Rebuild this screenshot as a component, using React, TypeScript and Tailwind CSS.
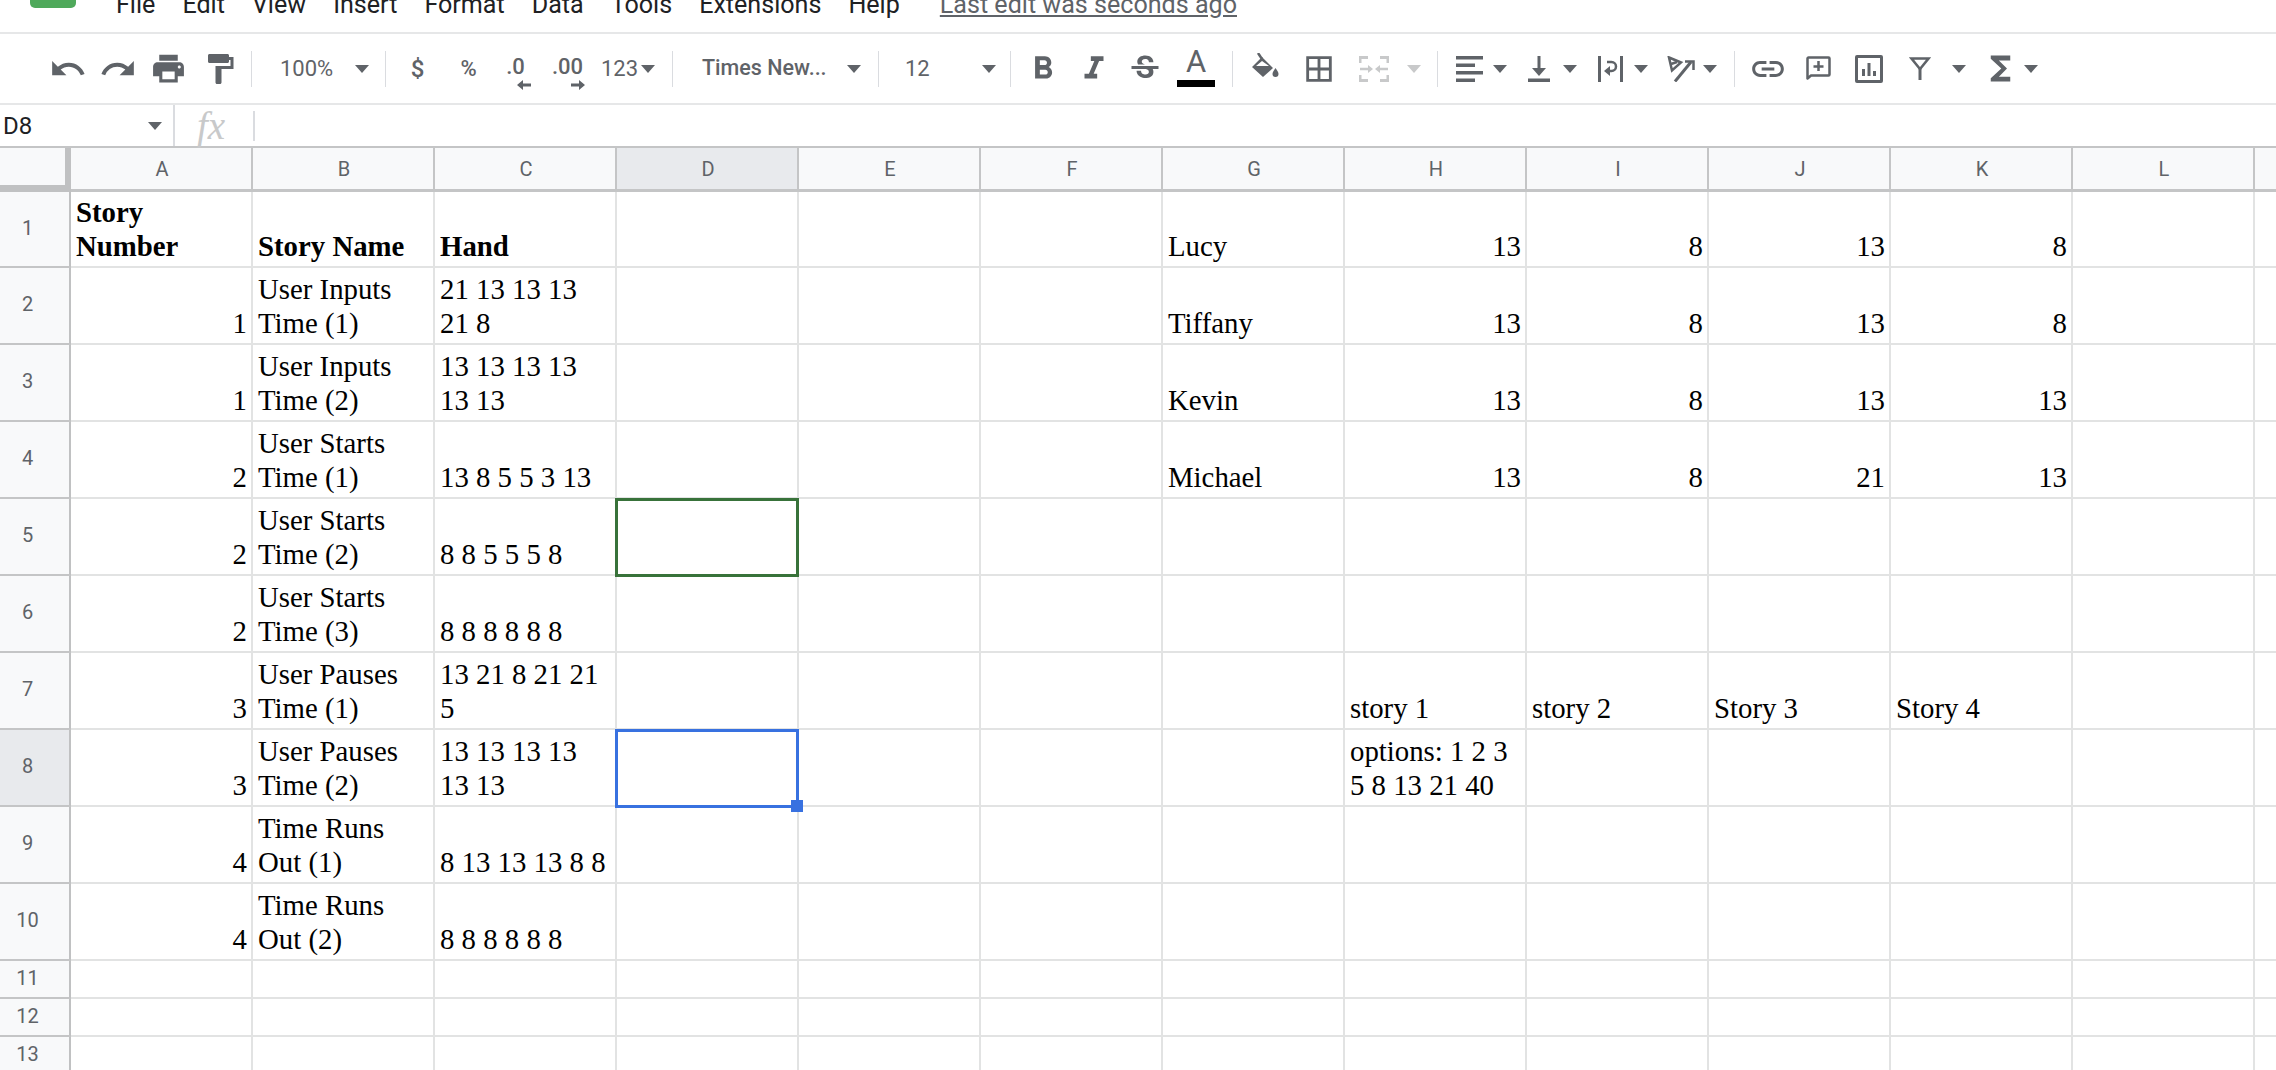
import React from 'react';
import {
  MdUndo,
  MdRedo,
  MdPrint,
  MdFormatPaint,
  MdFormatBold,
  MdFormatItalic,
  MdStrikethroughS,
  MdBorderAll,
  MdLink,
  MdFunctions,
} from 'react-icons/md';

const GREY = '#5f6368';

const Caret = ({ disabled }: { disabled?: boolean }) => (
  <svg width="14" height="8" viewBox="0 0 14 8" className="shrink-0">
    <path d="M0 0h14L7 8z" fill={disabled ? '#c8c9ca' : GREY} />
  </svg>
);

const Sep = ({ className = '' }: { className?: string }) => (
  <div className={`w-px h-[36px] shrink-0 bg-[#dadce0] ${className}`} />
);

const Slot = ({ className, children }: { className: string; children?: React.ReactNode }) => (
  <div className={`flex items-center justify-center shrink-0 h-[40px] ${className}`}>{children}</div>
);

const FillIcon = () => (
  <svg width="27" height="24" viewBox="0 0 27 24" fill="none" className="-mt-[8px]">
    <path d="M6 0l4 6" stroke={GREY} strokeWidth="2.500" />
    <path fillRule="evenodd" d="M10 4l11 11-10 9L0 14zM10 8l-6 5h13z" fill={GREY} />
    <path d="M23.500 15c2 3 3 4.500 3 6a3 3 0 01-6 0c0-1.500 1-3 3-6z" fill={GREY} />
  </svg>
);

const MergeIcon = () => (
  <svg width="30" height="26" viewBox="0 0 30 26" fill="none" stroke="#c8c9ca" strokeWidth="3">
    <path d="M1 7V1.500h8M21 1.500h8V7M1 19v5.500h8M21 24.500h8V19" />
    <path d="M1 13h9M20 13h9" strokeWidth="2.500" />
    <path d="M9 9l5 4-5 4zM21 9l-5 4 5 4z" fill="#c8c9ca" stroke="none" />
  </svg>
);

const AlignIcon = () => (
  <svg width="27" height="26" viewBox="0 0 27 26" fill={GREY}>
    <rect x="0" y="0" width="27" height="3.500" />
    <rect x="0" y="7.500" width="19" height="3.500" />
    <rect x="0" y="15" width="27" height="3.500" />
    <rect x="0" y="22.500" width="19" height="3.500" />
  </svg>
);

const VAlignIcon = () => (
  <svg width="22" height="26" viewBox="0 0 22 26" fill={GREY}>
    <rect x="9.500" y="0" width="3" height="14" />
    <path d="M4 12h14l-7 8z" />
    <rect x="0" y="22.500" width="22" height="3.500" />
  </svg>
);

const WrapIcon = () => (
  <svg width="25" height="26" viewBox="0 0 25 26" fill="none" stroke={GREY} strokeWidth="3">
    <path d="M1.500 0v26M23.500 0v26" />
    <path d="M9 6h4.500a4.500 4.500 0 010 9H10" strokeWidth="2.500" />
    <path d="M12 10l-6 5 6 5z" fill={GREY} stroke="none" />
  </svg>
);

const RotateIcon = () => (
  <svg width="28" height="26" viewBox="0 0 28 26" fill="none" stroke={GREY} strokeWidth="2.500">
    <path d="M2 1.500l12 5-9 8z" />
    <path d="M4 8l6-2" />
    <path d="M8 25.500L24 6" strokeWidth="3" />
    <path d="M18 5.500h8.500V14" strokeWidth="2.500" />
  </svg>
);

const CommentIcon = () => (
  <svg width="25" height="25" viewBox="0 0 25 25" fill="none" stroke={GREY} strokeWidth="2.500">
    <path d="M1.500 22.500V2.500a1 1 0 011-1h20a1 1 0 011 1v16a1 1 0 01-1 1H5z" strokeLinejoin="round" />
    <path d="M12.500 5v10M7.500 10.500h10" />
  </svg>
);

const ChartIcon = () => (
  <svg width="28" height="28" viewBox="0 0 28 28" fill={GREY}>
    <path fillRule="evenodd" d="M2 0h24a2 2 0 012 2v24a2 2 0 01-2 2H2a2 2 0 01-2-2V2a2 2 0 012-2zm1 3v22h22V3z" />
    <rect x="7" y="14" width="3" height="7" />
    <rect x="12.500" y="8" width="3" height="13" />
    <rect x="18" y="16" width="3" height="5" />
  </svg>
);

const FilterIcon = () => (
  <svg width="22" height="23" viewBox="0 0 22 23" fill="none" stroke={GREY} strokeWidth="2.500">
    <path d="M2.500 1.500h17L11 12z" />
    <path d="M11 11v12" strokeWidth="3" />
  </svg>
);

const ArrowLeft = () => (
  <svg width="14" height="10" viewBox="0 0 14 10" fill={GREY}>
    <path d="M6 0v3.500h8v3H6V10L0 5z" />
  </svg>
);

const ArrowRight = () => (
  <svg width="14" height="10" viewBox="0 0 14 10" fill={GREY}>
    <path d="M8 0v3.500H0v3h8V10l6-5z" />
  </svg>
);

const Toolbar = () => (
  <div className="h-[71px] flex items-center pl-[42px] border-b-2 border-[#e6e7e8] text-[22px] text-[#5f6368] whitespace-nowrap">
    <Slot className="w-[51px]"><MdUndo size={38} color={GREY} /></Slot>
    <Slot className="w-[50px]"><MdRedo size={38} color={GREY} /></Slot>
    <Slot className="w-[51px]"><MdPrint size={37} color={GREY} /></Slot>
    <Slot className="w-[51px]"><MdFormatPaint size={36} color={GREY} /></Slot>
    <Sep className="ml-[6px]" />
    <Slot className="w-[133px] justify-between! pl-[28px] pr-[16px]">
      <span>100%</span>
      <Caret />
    </Slot>
    <Sep />
    <Slot className="w-[51px] ml-[6px] font-medium text-[24px]"><span>$</span></Slot>
    <Slot className="w-[51px] font-medium text-[22px]"><span>%</span></Slot>
    <Slot className="w-[43px] relative font-medium text-[22px]">
      <span className="-mt-[4px]">.0</span>
      <span className="absolute right-[6px] -bottom-[1px]"><ArrowLeft /></span>
    </Slot>
    <Slot className="w-[61px] relative font-medium text-[22px]">
      <span className="-mt-[4px]">.00</span>
      <span className="absolute right-[13px] -bottom-[1px]"><ArrowRight /></span>
    </Slot>
    <Slot className="w-[74px] justify-start! gap-[3px] pl-[3px]">
      <span>123</span>
      <Caret />
    </Slot>
    <Sep />
    <Slot className="w-[205px] justify-between! pl-[29px] pr-[17px] font-medium text-[21.500px]">
      <span>Times New...</span>
      <Caret />
    </Slot>
    <Sep />
    <Slot className="w-[131px] justify-between! pl-[26px] pr-[14px]">
      <span>12</span>
      <Caret />
    </Slot>
    <Sep />
    <Slot className="w-[53px] ml-[5px]"><MdFormatBold size={38} color={GREY} /></Slot>
    <Slot className="w-[50px]"><MdFormatItalic size={38} color={GREY} /></Slot>
    <Slot className="w-[52px]"><MdStrikethroughS size={36} color={GREY} /></Slot>
    <Slot className="w-[50px] flex-col">
      <span className="text-[31px] leading-[34px] -mt-[5px]">A</span>
      <div className="w-[38px] h-[7px] bg-black mt-[1px]" />
    </Slot>
    <Sep className="ml-[11px]" />
    <Slot className="w-[51px] ml-[7px]"><FillIcon /></Slot>
    <Slot className="w-[56px]"><MdBorderAll size={34} color={GREY} /></Slot>
    <Slot className="w-[54px]"><MergeIcon /></Slot>
    <Slot className="w-[26px]"><Caret disabled /></Slot>
    <Sep className="ml-[10px]" />
    <Slot className="w-[42px] ml-[10px]"><AlignIcon /></Slot>
    <Slot className="w-[20px]"><Caret /></Slot>
    <Slot className="w-[42px] ml-[8px]"><VAlignIcon /></Slot>
    <Slot className="w-[20px]"><Caret /></Slot>
    <Slot className="w-[42px] ml-[9px]"><WrapIcon /></Slot>
    <Slot className="w-[20px]"><Caret /></Slot>
    <Slot className="w-[42px] ml-[9px]"><RotateIcon /></Slot>
    <Slot className="w-[16px]"><Caret /></Slot>
    <Sep className="ml-[16px]" />
    <Slot className="w-[50px] ml-[8px]"><MdLink size={38} color={GREY} /></Slot>
    <Slot className="w-[50px]"><CommentIcon /></Slot>
    <Slot className="w-[52px]"><ChartIcon /></Slot>
    <Slot className="w-[50px]"><FilterIcon /></Slot>
    <Slot className="w-[28px]"><Caret /></Slot>
    <Slot className="w-[42px] ml-[6px]"><MdFunctions size={39} color={GREY} /></Slot>
    <Slot className="w-[20px]"><Caret /></Slot>
  </div>
);

const MENU = ['File', 'Edit', 'View', 'Insert', 'Format', 'Data', 'Tools', 'Extensions', 'Help'];

const MenuBar = () => (
  <div className="h-[34px] flex items-end overflow-hidden border-b-2 border-[#e6e7e8] text-[25.100px] leading-[30px] whitespace-nowrap">
    <div className="self-start w-[46px] h-[8px] ml-[30px] mr-[40px] bg-[#4fa95b] rounded-b-[5px]" />
    <div className="flex gap-[27px] pb-[12px] text-[#202124]">
      {MENU.map((m) => (
        <span key={m}>{m}</span>
      ))}
      <span className="ml-[13px] text-[#5f6368] underline">Last edit was seconds ago</span>
    </div>
  </div>
);

const FormulaBar = () => (
  <div className="h-[41px] flex items-center whitespace-nowrap">
    <div className="w-[173px] flex items-center justify-between pl-[3px] pr-[11px] text-[24px] text-[#202124]">
      <span>D8</span>
      <Caret />
    </div>
    <div className="w-[2px] h-[41px] bg-[#dadce0]" />
    <div className="w-[78px] pl-[22px] font-['Liberation_Serif',serif] italic text-[39px] leading-[36px] text-[#c8c9ca]">fx</div>
    <div className="w-[2px] h-[30px] bg-[#dadce0]" />
  </div>
);

const COLS = ['A', 'B', 'C', 'D', 'E', 'F', 'G', 'H', 'I', 'J', 'K', 'L', ''];

type CellData = { t: string; r?: boolean; b?: boolean };

// row -> col index -> text
const DATA: Record<number, Record<number, CellData>> = {
  1: {
    0: { t: 'Story\nNumber', b: true },
    1: { t: 'Story Name', b: true },
    2: { t: 'Hand', b: true },
    6: { t: 'Lucy' },
    7: { t: '13', r: true },
    8: { t: '8', r: true },
    9: { t: '13', r: true },
    10: { t: '8', r: true },
  },
  2: {
    0: { t: '1', r: true },
    1: { t: 'User Inputs\nTime (1)' },
    2: { t: '21 13 13 13\n21 8' },
    6: { t: 'Tiffany' },
    7: { t: '13', r: true },
    8: { t: '8', r: true },
    9: { t: '13', r: true },
    10: { t: '8', r: true },
  },
  3: {
    0: { t: '1', r: true },
    1: { t: 'User Inputs\nTime (2)' },
    2: { t: '13 13 13 13\n13 13' },
    6: { t: 'Kevin' },
    7: { t: '13', r: true },
    8: { t: '8', r: true },
    9: { t: '13', r: true },
    10: { t: '13', r: true },
  },
  4: {
    0: { t: '2', r: true },
    1: { t: 'User Starts\nTime (1)' },
    2: { t: '13 8 5 5 3 13' },
    6: { t: 'Michael' },
    7: { t: '13', r: true },
    8: { t: '8', r: true },
    9: { t: '21', r: true },
    10: { t: '13', r: true },
  },
  5: {
    0: { t: '2', r: true },
    1: { t: 'User Starts\nTime (2)' },
    2: { t: '8 8 5 5 5 8' },
  },
  6: {
    0: { t: '2', r: true },
    1: { t: 'User Starts\nTime (3)' },
    2: { t: '8 8 8 8 8 8' },
  },
  7: {
    0: { t: '3', r: true },
    1: { t: 'User Pauses\nTime (1)' },
    2: { t: '13 21 8 21 21\n5' },
    7: { t: 'story 1' },
    8: { t: 'story 2' },
    9: { t: 'Story 3' },
    10: { t: 'Story 4' },
  },
  8: {
    0: { t: '3', r: true },
    1: { t: 'User Pauses\nTime (2)' },
    2: { t: '13 13 13 13\n13 13' },
    7: { t: 'options: 1 2 3\n5 8 13 21 40' },
  },
  9: {
    0: { t: '4', r: true },
    1: { t: 'Time Runs\nOut (1)' },
    2: { t: '8 13 13 13 8 8' },
  },
  10: {
    0: { t: '4', r: true },
    1: { t: 'Time Runs\nOut (2)' },
    2: { t: '8 8 8 8 8 8' },
  },
};

const ROWS = [1, 2, 3, 4, 5, 6, 7, 8, 9, 10, 11, 12, 13];

const Cell = ({ row, col }: { row: number; col: number }) => {
  const d = DATA[row]?.[col];
  const isGreen = row === 5 && col === 3;
  const isBlue = row === 8 && col === 3;
  return (
    <div
      className={`relative flex items-end border-r-2 border-b-2 border-[#e2e3e3] pl-[5px] pr-[4px] pb-[3px] text-black font-['Liberation_Serif',serif] text-[28.800px] leading-[34px] whitespace-pre-line ${
        d?.r ? 'justify-end text-right' : ''
      } ${d?.b ? 'font-bold' : ''}`}
    >
      {d && <span>{d.t}</span>}
      {isGreen && <div className="absolute z-10 -left-[2px] -top-[1px] -right-[2px] -bottom-[3px] border-[3px] border-[#38723a]" />}
      {isBlue && (
        <div className="absolute z-10 -left-[2px] -top-[1px] -right-[2px] -bottom-[3px] border-[3px] border-[#3871e0]">
          <div className="absolute -right-[7px] -bottom-[7px] w-[12px] h-[12px] bg-[#3871e0]" />
        </div>
      )}
    </div>
  );
};

const Grid = () => (
  <div className="grid grid-cols-[71px_repeat(13,182px)] grid-rows-[44px_76px_repeat(9,77px)_38px_38px_38px] border-t-2 border-[#c4c5c6] font-['Roboto',sans-serif]">
    <div className="bg-[#f8f9fa] border-b-[7px] border-r-[6px] border-[#c0c1c2]" />
    {COLS.map((c, i) => (
      <div
        key={i}
        className={`flex items-center justify-center pl-[2px] border-r-2 border-b-[3px] border-[#c4c5c6] text-[20px] text-[#5f6368] ${
          c === 'D' ? 'bg-[#e8eaed]' : 'bg-[#f8f9fa]'
        }`}
      >
        {c}
      </div>
    ))}
    {ROWS.map((r) => (
      <React.Fragment key={r}>
        <div
          className={`flex items-center justify-center pr-[14px] pb-[3px] border-r-2 border-b-2 border-r-[#c0c1c2] border-b-[#c4c5c6] text-[20px] text-[#5f6368] ${
            r === 8 ? 'bg-[#e8eaed]' : 'bg-[#f8f9fa]'
          }`}
        >
          {r}
        </div>
        {COLS.map((_, c) => (
          <Cell key={c} row={r} col={c} />
        ))}
      </React.Fragment>
    ))}
  </div>
);

export default function App() {
  return (
    <div className="w-[2276px] h-[1070px] overflow-hidden bg-white font-['Roboto',sans-serif]">
      <MenuBar />
      <Toolbar />
      <FormulaBar />
      <Grid />
    </div>
  );
}
